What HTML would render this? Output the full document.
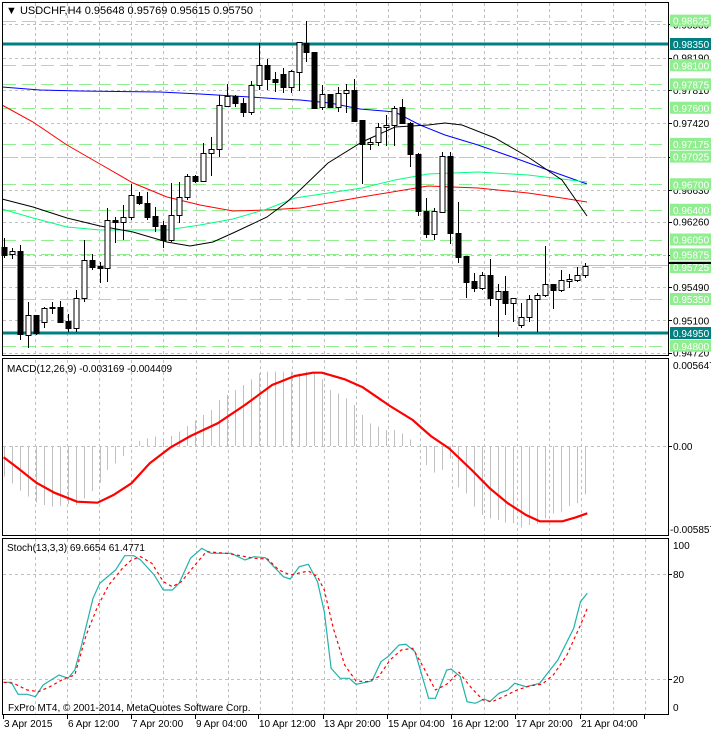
<!DOCTYPE html>
<html><head><meta charset="utf-8"><style>
html,body{margin:0;padding:0;background:#fff;width:711px;height:732px;overflow:hidden}
svg{display:block;font-family:"Liberation Sans",sans-serif}
</style></head><body>
<svg id="s" width="711" height="732" xmlns="http://www.w3.org/2000/svg" font-size="10"></svg>
<script>
var s='';
function L(x1,y1,x2,y2,c,w,d){s+='<line x1="'+x1+'" y1="'+y1+'" x2="'+x2+'" y2="'+y2+'" stroke="'+c+'" stroke-width="'+(w||1)+'"'+(d?' stroke-dasharray="'+d+'"':'')+'/>';}
function T(x,y,t,c,extra){s+='<text x="'+x+'" y="'+y+'" fill="'+(c||'#000')+'" '+(extra||'')+'>'+t+'</text>';}
function P(pts,c,w,d){s+='<polyline fill="none" stroke="'+c+'" stroke-width="'+(w||1)+'"'+(d?' stroke-dasharray="'+d+'"':'')+' points="'+pts.map(function(p){return p[0]+','+p[1]}).join(' ')+'"/>';}
function yp(p){return 44+(0.98350-p)*8500;}
var vx=[];for(var k=0;k<20;k++)vx.push(Math.round(35+k*32.1)+.5);
function vgrid(y1,y2){vx.forEach(function(x){L(x,y1,x,y2,'#c0c0c0',1,'3,3');});}
vgrid(3,355);
var gp=['0.98580','0.98190','0.97810','0.97420','0.97025','0.96630','0.96260','0.95870','0.95490','0.95100','0.94720'];
gp.forEach(function(p){var y=Math.round(yp(+p))+.5;L(3,y,668,y,'#c0c0c0',1,'3,3');});
var green=['0.98625','0.98100','0.97875','0.97600','0.97175','0.97025','0.96700','0.96400','0.96050','0.95875','0.95725','0.95350','0.94800'];
green.forEach(function(p){var y=Math.round(yp(+p))+.5;L(3,y,668,y,'#90ee90',1,'13,6');});
L(3,265.5,668,265.5,'#c0c0c0',1);
L(3,44,668,44,'#008080',3);L(3,333,668,333,'#008080',3);
P([[2,87],[40,90],[80,91],[160,92],[200,94],[250,97],[280,99],[300,100],[330,103],[360,109],[395,112],[420,125],[445,135],[478,145],[512,157],[545,169],[587,184]],'#0000ff',1);
P([[2,105],[33,122],[67,145],[100,164],[133,183],[167,197],[200,205],[233,211],[267,210],[300,208],[362,197],[428,186],[478,188],[528,193],[562,198],[587,202]],'#ff0000',1);
P([[2,209],[33,218],[67,227],[100,230],[167,230],[200,225],[233,219],[267,209],[295,198],[362,188],[395,180],[428,174],[478,172],[528,175],[587,182]],'#00ff7f',1);
P([[2,199],[33,207],[67,218],[100,226],[133,232],[167,242],[190,246],[213,242],[233,233],[267,217],[287,202],[300,190],[328,163],[362,142],[395,127],[428,125],[445,123],[462,125],[495,138],[528,157],[562,180],[587,216]],'#000',1);
var C=[[247,255,238,258,0],[251,254,248,259,1],[251,334,245,340,0],[315,335,302,348,1],[315,333,315,335,0],[308,322,307,328,1],[307,308,302,314,0],[307,322,301,322,0],[321,328,314,332,0],[298,328,290,332,1],
[260,298,240,302,1],[260,267,254,270,0],[266,268,262,283,0],[220,268,208,282,1],[220,222,217,243,0],[217,222,205,240,1],[195,217,184,220,1],[196,203,192,205,0],[203,217,192,220,0],[216,226,207,232,0],
[225,240,221,248,0],[215,240,183,242,1],[197,215,182,223,1],[176,197,174,200,1],[176,181,175,183,0],[153,181,143,181,1],[149,153,137,176,1],[105,149,95,157,1],[96,106,84,107,1],[96,103,95,107,0],
[103,112,98,117,0],[85,112,81,115,1],[65,85,43,90,1],[65,79,59,90,0],[79,82,72,92,0],[74,87,68,93,0],[71,87,70,93,1],[42,72,42,91,1],[43,52,21,62,0],[52,108,52,108,0],
[94,107,85,110,1],[94,107,94,107,0],[93,107,87,112,1],[90,93,84,113,1],[90,121,79,121,0],[120,144,120,184,0],[142,144,138,150,1],[127,142,123,146,1],[125,127,115,146,1],[108,125,106,146,1],
[107,123,99,123,0],[123,154,122,167,0],[154,211,153,216,0],[211,234,198,238,0],[211,234,208,240,1],[156,212,152,212,1],[156,233,152,244,0],[233,257,202,263,0],[256,282,256,298,0],[281,288,273,292,0],
[275,288,272,290,1],[275,298,259,306,0],[291,299,284,337,1],[291,303,276,315,0],[298,303,298,322,1],[317,325,303,328,1],[299,317,295,322,1],[295,299,293,332,1],[284,295,246,297,1],[284,290,284,309,0],
[280,290,270,292,1],[279,281,274,288,1],[275,280,267,282,1],[266,275,263,278,1]];
C.forEach(function(c,i){var x=Math.round(4+7.96*i)+.5;L(x,c[2],x,c[3],'#000',1);var h=Math.max(1,c[1]-c[0]);
s+='<rect x="'+(x-2.5)+'" y="'+(c[0]+.5)+'" width="5" height="'+h+'" fill="'+(c[4]?'#fff':'#000')+'" stroke="#000" stroke-width="1"/>';});
s+='<rect x="2.5" y="2.5" width="666" height="353" fill="none" stroke="#000"/>';
T(6,14,'▼ USDCHF,H4  0.95648 0.95769 0.95615 0.95750','#000','font-size="11"');
gp.forEach(function(p){var y=yp(+p);L(669,Math.round(y)+.5,672,Math.round(y)+.5,'#000');T(673,y+4,p);});
green.forEach(function(p){var y=yp(+p);s+='<rect x="670" y="'+(y-6)+'" width="41" height="12" fill="#90ee90"/>';T(673,y+4,p,'#fff');});
[['0.98350',44],['0.94950',333]].forEach(function(a){s+='<rect x="670" y="'+(a[1]-6)+'" width="41" height="12" fill="#008080"/>';T(673,a[1]+4,a[0],'#fff');});
L(669,263,711,263,'#000',2);
vgrid(360,535);L(3,446.5,668,446.5,'#c0c0c0',1,'3,3');
var H=[440,460,482,500,518,525,530,528,522,525,505,483,458,420,400,378,348,333,325,320,335,318,305,288,272,255,240,210,195,180,165,148,130,125,125,125,125,130,125,128,148,180,190,205,225,255,280,290,300,300,310,328,348,405,428,420,385,472,490,530,555,565,570,578,580,592,585,582,565,550,545,528,520,493];
H.forEach(function(v,i){var x=Math.round(4+7.96*i)+.5;L(x,446,x,330+v/3,'#c0c0c0',1);});
var M=[[8,382],[40,415],[80,458],[120,488],[170,515],[215,518],[250,495],[290,460],[330,400],[375,353],[420,318],[480,280],[540,225],[600,165],[650,138],[690,128],[710,128],[760,148],[800,172],[860,228],[910,270],[950,318],[990,355],[1040,420],[1080,475],[1120,520],[1160,555],[1190,574],[1240,574],[1270,562],[1295,550]];
P(M.map(function(p){return[(p[0]/2.205).toFixed(1),(330+p[1]/3).toFixed(1)]}),'#ff0000',2.2);
s+='<rect x="2.5" y="358.5" width="666" height="177" fill="none" stroke="#000"/>';
T(7,372,'MACD(12,26,9) -0.003169 -0.004409');
T(673,369,'0.005647');T(673,450,'0.00');T(670,533,'-0.005857');
L(669,446.5,672,446.5,'#000');
vgrid(539,714);L(3,574.5,668,574.5,'#c0c0c0',1,'3,3');L(3,679.5,668,679.5,'#c0c0c0',1,'3,3');
var K=[[8,442],[25,442],[40,478],[60,478],[78,485],[95,450],[130,420],[150,430],[165,405],[180,330],[205,190],[220,145],[255,105],[275,62],[295,62],[310,75],[340,120],[360,165],[380,165],[395,145],[420,70],[445,40],[465,55],[510,55],[540,75],[560,65],[585,68],[625,125],[640,132],[660,95],[680,88],[700,140],[715,230],[730,400],[750,430],[770,430],[785,448],[820,438],[840,380],[855,365],[880,330],[895,328],[915,350],[945,490],[960,490],[985,405],[995,402],[1015,425],[1030,500],[1048,505],[1068,492],[1080,500],[1100,475],[1120,465],[1135,445],[1160,455],[1190,445],[1230,375],[1265,280],[1280,200],[1295,175]];
var D=[[8,442],[30,445],[60,465],[85,470],[110,455],[140,432],[165,420],[190,300],[215,215],[240,150],[270,100],[290,75],[310,65],[335,85],[360,140],[380,155],[400,140],[430,90],[455,50],[500,55],[530,62],[560,70],[590,72],[615,105],[640,120],[680,108],[700,125],[715,165],[735,280],[760,390],[785,438],[810,440],[835,425],[860,375],[885,345],[910,340],[935,400],[960,465],[985,448],[1012,412],[1040,460],[1065,495],[1085,500],[1110,485],[1140,465],[1170,452],[1195,448],[1220,420],[1250,360],[1280,270],[1295,220]];
function tr(a){return a.map(function(p){return[(p[0]/2.205).toFixed(1),(535+p[1]/3).toFixed(1)]});}
P(tr(K),'#20b2aa',1.2);P(tr(D),'#ff0000',1.2,'3,3');
s+='<rect x="2.5" y="538.5" width="666" height="176" fill="none" stroke="#000"/>';
T(7,551,'Stoch(13,3,3) 69.6654 61.4771');
T(673,549,'100');T(673,578,'80');T(673,683,'20');T(673,711,'0');
L(669,574.5,672,574.5,'#000');L(669,679.5,672,679.5,'#000');
T(8,711,'FxPro MT4, © 2001-2014, MetaQuotes Software Corp.');
var tx=[3,67,131,195,258,323,387,451,515,580],tl=['3 Apr 2015','6 Apr 12:00','7 Apr 20:00','9 Apr 04:00','10 Apr 12:00','13 Apr 20:00','15 Apr 04:00','16 Apr 12:00','17 Apr 20:00','21 Apr 04:00'];
tx.forEach(function(x,i){L(x+.5,715,x+.5,719,'#000');T(x+1,727,tl[i]);});
L(644.5,715,644.5,719,'#000');
document.getElementById('s').innerHTML=s;
</script>
</body></html>
